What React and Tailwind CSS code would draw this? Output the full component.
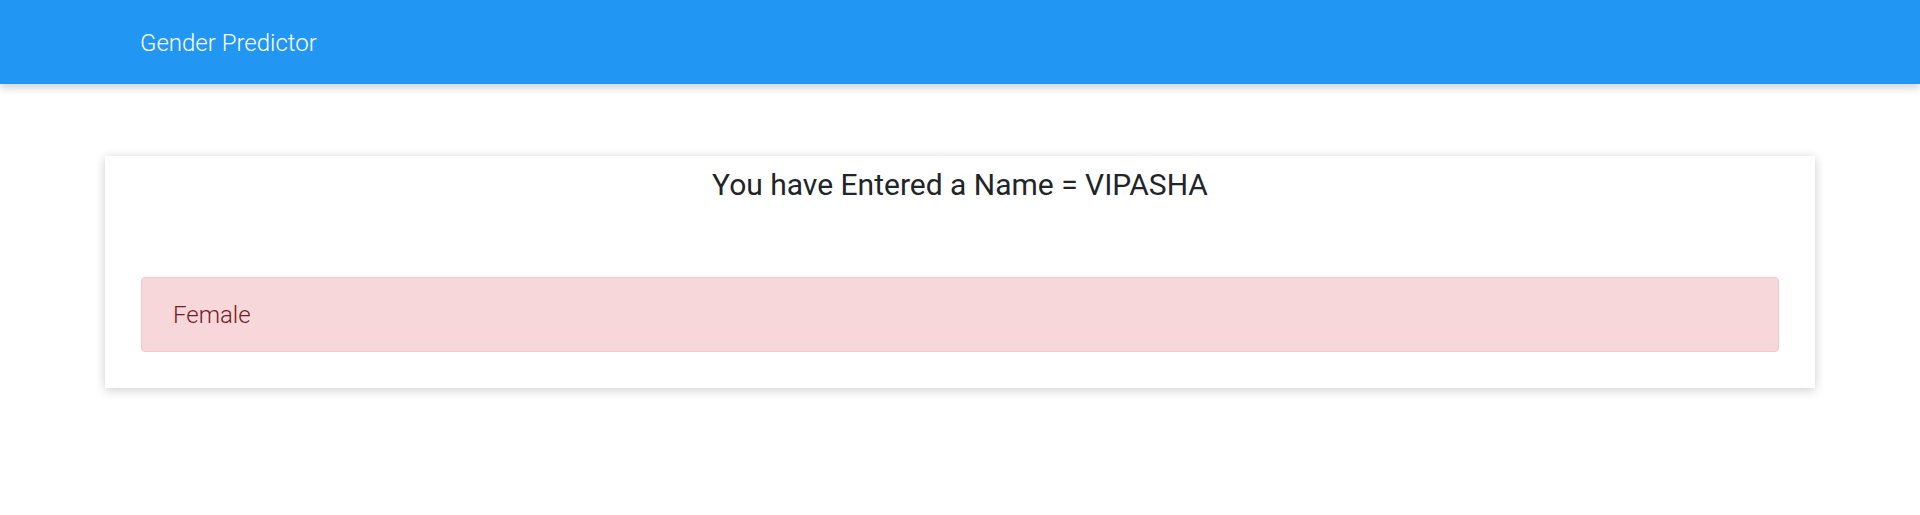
export default function App() {
  return (
    <div className="min-h-[515px] bg-white" style={{ fontFamily: 'Roboto, "Liberation Sans", sans-serif' }}>
      <nav className="h-[84px] bg-[#2196f3] shadow-[0_4px_8px_rgba(0,0,0,0.18)] flex items-center pl-[140px] pt-[2px]">
        <span className="text-white text-[24px] font-light leading-none">Gender Predictor</span>
      </nav>
      <div className="mx-[105px] mt-[72px] bg-white shadow-[0_2px_10px_rgba(0,0,0,0.2)] px-[36px] pt-[11px] pb-[36px]">
        <h3 className="text-center text-[30px] leading-[36px] font-normal text-[#212529]">
          You have Entered a Name = VIPASHA
        </h3>
        <div className="mt-[74px] h-[75px] flex items-center pl-[31px] pt-[1px] bg-[#f8d7da] border border-[#f5c6cb] rounded-[4px] text-[#721c24] text-[24px] font-light">
          Female
        </div>
      </div>
    </div>
  );
}
